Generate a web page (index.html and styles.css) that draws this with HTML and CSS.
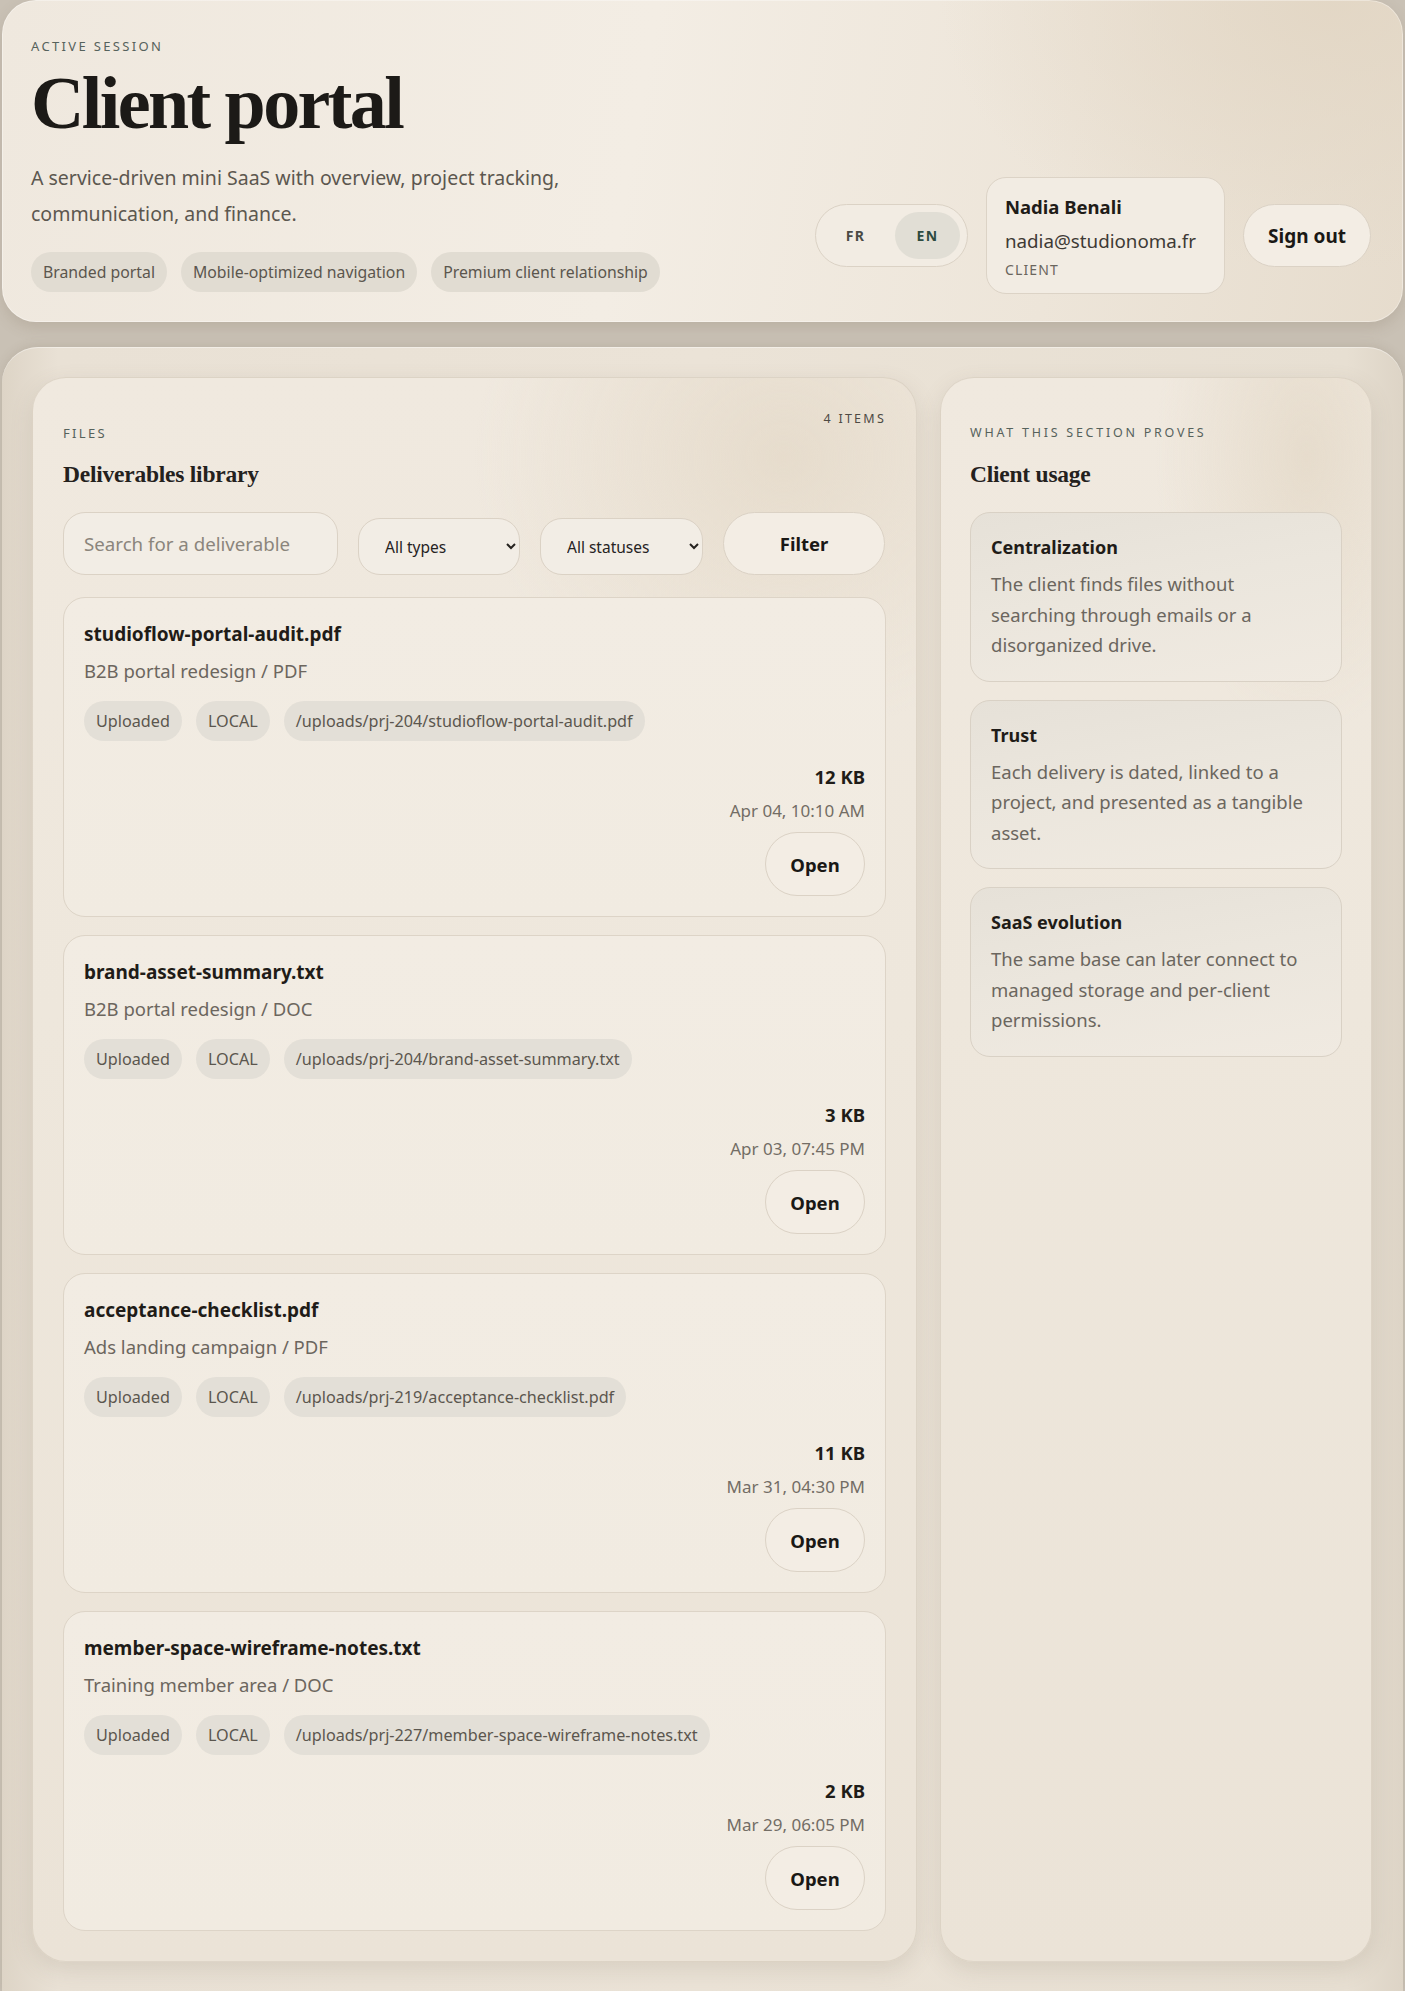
FILE: index.html
```html
<!DOCTYPE html>
<html lang="en">
<head>
<meta charset="utf-8">
<title>Client portal</title>
<link rel="stylesheet" href="styles.css">
</head>
<body>
<div class="page">
  <header class="hero">
    <div class="hero-main">
      <p class="eyebrow">Active session</p>
      <h1 class="hero-title">Client portal</h1>
      <p class="lead">A service-driven mini SaaS with overview, project tracking, communication, and finance.</p>
      <div class="chips">
        <span class="chip">Branded portal</span>
        <span class="chip">Mobile-optimized navigation</span>
        <span class="chip">Premium client relationship</span>
      </div>
    </div>
    <div class="hero-side">
      <div class="lang">
        <button class="lang-btn" type="button">FR</button>
        <button class="lang-btn is-active" type="button">EN</button>
      </div>
      <div class="profile">
        <strong class="profile-name">Nadia Benali</strong>
        <span class="profile-mail">nadia@studionoma.fr</span>
        <span class="profile-role">CLIENT</span>
      </div>
      <button class="pill-btn signout" type="button">Sign out</button>
    </div>
  </header>

  <main class="workspace">
    <section class="panel files">
      <div class="panel-head">
        <div class="panel-heading">
          <p class="eyebrow">Files</p>
          <h2 class="panel-title">Deliverables library</h2>
        </div>
        <span class="count">4 items</span>
      </div>

      <form class="filters">
        <input class="search" type="text" placeholder="Search for a deliverable">
        <select class="select">
          <option>All types</option>
        </select>
        <select class="select">
          <option>All statuses</option>
        </select>
        <button class="pill-btn filter-btn" type="button">Filter</button>
      </form>

      <div class="file-list">
        <article class="file-card">
          <h3 class="file-name">studioflow-portal-audit.pdf</h3>
          <p class="file-sub">B2B portal redesign / PDF</p>
          <div class="tags">
            <span class="tag">Uploaded</span>
            <span class="tag">LOCAL</span>
            <span class="tag">/uploads/prj-204/studioflow-portal-audit.pdf</span>
          </div>
          <div class="file-meta">
            <strong class="file-size">12 KB</strong>
            <span class="file-date">Apr 04, 10:10 AM</span>
            <button class="pill-btn open-btn" type="button">Open</button>
          </div>
        </article>

        <article class="file-card">
          <h3 class="file-name">brand-asset-summary.txt</h3>
          <p class="file-sub">B2B portal redesign / DOC</p>
          <div class="tags">
            <span class="tag">Uploaded</span>
            <span class="tag">LOCAL</span>
            <span class="tag">/uploads/prj-204/brand-asset-summary.txt</span>
          </div>
          <div class="file-meta">
            <strong class="file-size">3 KB</strong>
            <span class="file-date">Apr 03, 07:45 PM</span>
            <button class="pill-btn open-btn" type="button">Open</button>
          </div>
        </article>

        <article class="file-card">
          <h3 class="file-name">acceptance-checklist.pdf</h3>
          <p class="file-sub">Ads landing campaign / PDF</p>
          <div class="tags">
            <span class="tag">Uploaded</span>
            <span class="tag">LOCAL</span>
            <span class="tag">/uploads/prj-219/acceptance-checklist.pdf</span>
          </div>
          <div class="file-meta">
            <strong class="file-size">11 KB</strong>
            <span class="file-date">Mar 31, 04:30 PM</span>
            <button class="pill-btn open-btn" type="button">Open</button>
          </div>
        </article>

        <article class="file-card">
          <h3 class="file-name">member-space-wireframe-notes.txt</h3>
          <p class="file-sub">Training member area / DOC</p>
          <div class="tags">
            <span class="tag">Uploaded</span>
            <span class="tag">LOCAL</span>
            <span class="tag">/uploads/prj-227/member-space-wireframe-notes.txt</span>
          </div>
          <div class="file-meta">
            <strong class="file-size">2 KB</strong>
            <span class="file-date">Mar 29, 06:05 PM</span>
            <button class="pill-btn open-btn" type="button">Open</button>
          </div>
        </article>
      </div>
    </section>

    <aside class="panel usage">
      <p class="eyebrow eyebrow-wide">What this section proves</p>
      <h2 class="panel-title">Client usage</h2>
      <div class="usage-list">
        <div class="usage-card">
          <h3 class="usage-title">Centralization</h3>
          <p class="usage-text">The client finds files without searching through emails or a disorganized drive.</p>
        </div>
        <div class="usage-card">
          <h3 class="usage-title">Trust</h3>
          <p class="usage-text">Each delivery is dated, linked to a project, and presented as a tangible asset.</p>
        </div>
        <div class="usage-card">
          <h3 class="usage-title">SaaS evolution</h3>
          <p class="usage-text">The same base can later connect to managed storage and per-client permissions.</p>
        </div>
      </div>
    </aside>
  </main>
</div>
</body>
</html>
```

FILE: styles.css
```css
* { box-sizing: border-box; }

html, body {
  margin: 0;
  padding: 0;
}

body {
  background: #c9c1b5;
  font-family: "Noto Sans", "Open Sans", sans-serif;
  color: #1f1c18;
}

.page {
  padding: 0 2px;
  display: flex;
  flex-direction: column;
  gap: 25px;
}

p, h1, h2, h3 { margin: 0; }

.eyebrow {
  font-size: 13px;
  line-height: 18px;
  letter-spacing: 0.18em;
  text-transform: uppercase;
  color: #56625c;
}

/* ---------- hero ---------- */
.hero {
  display: flex;
  justify-content: space-between;
  align-items: flex-end;
  padding: 37px 32px 30px 29px;
  border-radius: 34px;
  background:
    radial-gradient(ellipse 40% 120% at 95% 0%, rgba(226, 214, 196, 0.9), rgba(226, 214, 196, 0) 70%),
    linear-gradient(100deg, #efe8de 0%, #f3ede4 45%, #ede5d9 75%, #e6dccd 100%);
  box-shadow: 0 6px 14px rgba(120, 105, 85, 0.18), inset 0 0 0 1px rgba(255, 255, 255, 0.35);
}

.hero-title {
  margin-top: 11px;
  font-family: "Liberation Serif", "Times New Roman", serif;
  font-weight: 700;
  font-size: 74px;
  line-height: 74px;
  letter-spacing: -0.035em;
  color: #1c1a17;
}

.lead {
  margin-top: 20px;
  max-width: 580px;
  font-size: 19.5px;
  line-height: 36px;
  color: #5c574f;
}

.chips {
  margin-top: 20px;
  display: flex;
  gap: 14px;
}

.chip, .tag {
  display: inline-flex;
  align-items: center;
  height: 40px;
  padding: 0 12px;
  border-radius: 20px;
  background: #e1dcd2;
  color: #5b564e;
  font-size: 15.8px;
  white-space: nowrap;
}

.hero-side {
  display: flex;
  align-items: center;
  gap: 18px;
  margin-bottom: -2px;
}

.lang {
  display: flex;
  gap: 7px;
  padding: 7px;
  border: 1px solid #dbd2c5;
  border-radius: 32px;
  background: #f2ece3;
}

.lang-btn {
  width: 65px;
  height: 47px;
  border: 0;
  border-radius: 24px;
  background: transparent;
  font-family: "Noto Sans", sans-serif;
  font-weight: 700;
  font-size: 14px;
  letter-spacing: 0.1em;
  color: #4b4a45;
}

.lang-btn.is-active {
  background: #e1ded5;
  color: #2d4b40;
}

.profile {
  display: flex;
  flex-direction: column;
  padding: 16px 28px 13px 18px;
  border: 1px solid #dcd3c6;
  border-radius: 20px;
  background: #f2ece3;
}

.profile-name {
  font-size: 18.5px;
  line-height: 26px;
  font-weight: 700;
  color: #1f1c18;
}

.profile-mail {
  margin-top: 8px;
  font-size: 18.75px;
  line-height: 26px;
  color: #3e3a35;
}

.profile-role {
  margin-top: 6px;
  font-size: 14px;
  line-height: 20px;
  letter-spacing: 0.08em;
  color: #6a655d;
}

.pill-btn {
  border: 1px solid #dbd2c5;
  background: #f3ede4;
  font-family: "Noto Sans", sans-serif;
  font-weight: 700;
  color: #1a1815;
  cursor: pointer;
}

.signout {
  height: 63px;
  padding: 0 24px;
  border-radius: 32px;
  font-size: 19px;
}

/* ---------- workspace ---------- */
.workspace {
  display: grid;
  grid-template-columns: 885px 432px;
  gap: 23px;
  align-items: stretch;
  padding: 30px 30px 30px 30px;
  border-radius: 36px 36px 0 0;
  background:
    linear-gradient(90deg, #ddd4c6 0%, #e9e1d5 4%, #ebe3d7 50%, #e7dfd2 96%, #ddd4c6 100%);
  box-shadow: 0 -2px 10px rgba(120, 105, 85, 0.15), inset 0 1px 0 rgba(255, 255, 255, 0.4);
}

.panel {
  border-radius: 34px;
  border: 1px solid rgba(210, 200, 185, 0.6);
  background:
    radial-gradient(ellipse 50% 25% at 85% 5%, rgba(228, 217, 200, 0.8), rgba(228, 217, 200, 0) 70%),
    linear-gradient(180deg, #f0e9df 0%, #eee7dc 40%, #ebe3d7 100%);
  box-shadow: 0 8px 22px rgba(120, 105, 85, 0.16);
}

.files {
  padding: 32px 30px 30px 30px;
}

.panel-head {
  display: flex;
  justify-content: space-between;
  align-items: flex-start;
}

.panel-heading {
  padding-top: 14px;
}

.count {
  font-size: 12.5px;
  line-height: 18px;
  letter-spacing: 0.18em;
  text-transform: uppercase;
  color: #4e4a44;
}

.panel-title {
  margin-top: 17px;
  font-family: "Liberation Serif", "Times New Roman", serif;
  font-weight: 700;
  font-size: 23.5px;
  line-height: 30px;
  letter-spacing: -0.01em;
  color: #24211d;
}

.filters {
  margin-top: 23px;
  display: grid;
  grid-template-columns: 275px 162px 163px 162px;
  gap: 20px;
  align-items: end;
}

.search {
  height: 63px;
  padding: 0 20px;
  border: 1px solid #dbd2c5;
  border-radius: 22px;
  background: #f2ede5;
  font-family: "Noto Sans", sans-serif;
  font-size: 18.7px;
  color: #1f1c18;
  outline: none;
}

.search::placeholder { color: #8b857c; }

.select {
  height: 57px;
  padding: 0 10px 0 22px;
  border: 1px solid #dbd2c5;
  border-radius: 22px;
  background: #f2ede5;
  font-family: "Noto Sans", sans-serif;
  font-size: 15.5px;
  color: #26231f;
}

.filter-btn {
  height: 63px;
  border-radius: 32px;
  font-size: 18.5px;
}

.file-list {
  margin-top: 22px;
  display: flex;
  flex-direction: column;
  gap: 18px;
}

.file-card {
  display: flex;
  flex-direction: column;
  padding: 23px 20px 20px 20px;
  border: 1px solid #ddd4c7;
  border-radius: 22px;
  background: linear-gradient(180deg, #f2ece3 0%, #f1ebe1 100%);
}

.file-name {
  font-size: 19px;
  line-height: 27px;
  font-weight: 700;
  color: #1f1c18;
}

.file-sub {
  margin-top: 10px;
  font-size: 18.5px;
  line-height: 26px;
  color: #6c665e;
}

.tags {
  margin-top: 17px;
  display: flex;
  gap: 14px;
}

.tag {
  font-size: 16.2px;
  background: #e3dfd7;
}

.file-meta {
  margin-top: 22px;
  display: flex;
  flex-direction: column;
  align-items: flex-end;
  text-align: right;
}

.file-size {
  font-size: 18.5px;
  line-height: 27px;
  font-weight: 700;
  color: #1f1c18;
}

.file-date {
  margin-top: 9px;
  font-size: 17px;
  line-height: 24px;
  color: #736d65;
}

.open-btn {
  margin-top: 9px;
  width: 100px;
  height: 64px;
  border-radius: 32px;
  font-size: 18.5px;
}

/* ---------- usage ---------- */
.usage {
  padding: 46px 29px 30px 29px;
}

.eyebrow-wide {
  letter-spacing: 0.22em;
  font-size: 12.5px;
}

.usage-list {
  margin-top: 23px;
  display: flex;
  flex-direction: column;
  gap: 18px;
}

.usage-card {
  padding: 21px 20px 20px 20px;
  border: 1px solid #d9d1c5;
  border-radius: 20px;
  background: linear-gradient(170deg, #e6e1d8 0%, #ebe6dd 45%, #f0eae1 100%);
}

.usage-title {
  font-size: 18px;
  line-height: 27px;
  font-weight: 700;
  color: #1f1c18;
}

.usage-text {
  margin-top: 8px;
  font-size: 18.5px;
  line-height: 30.5px;
  color: #6b665e;
}
```
